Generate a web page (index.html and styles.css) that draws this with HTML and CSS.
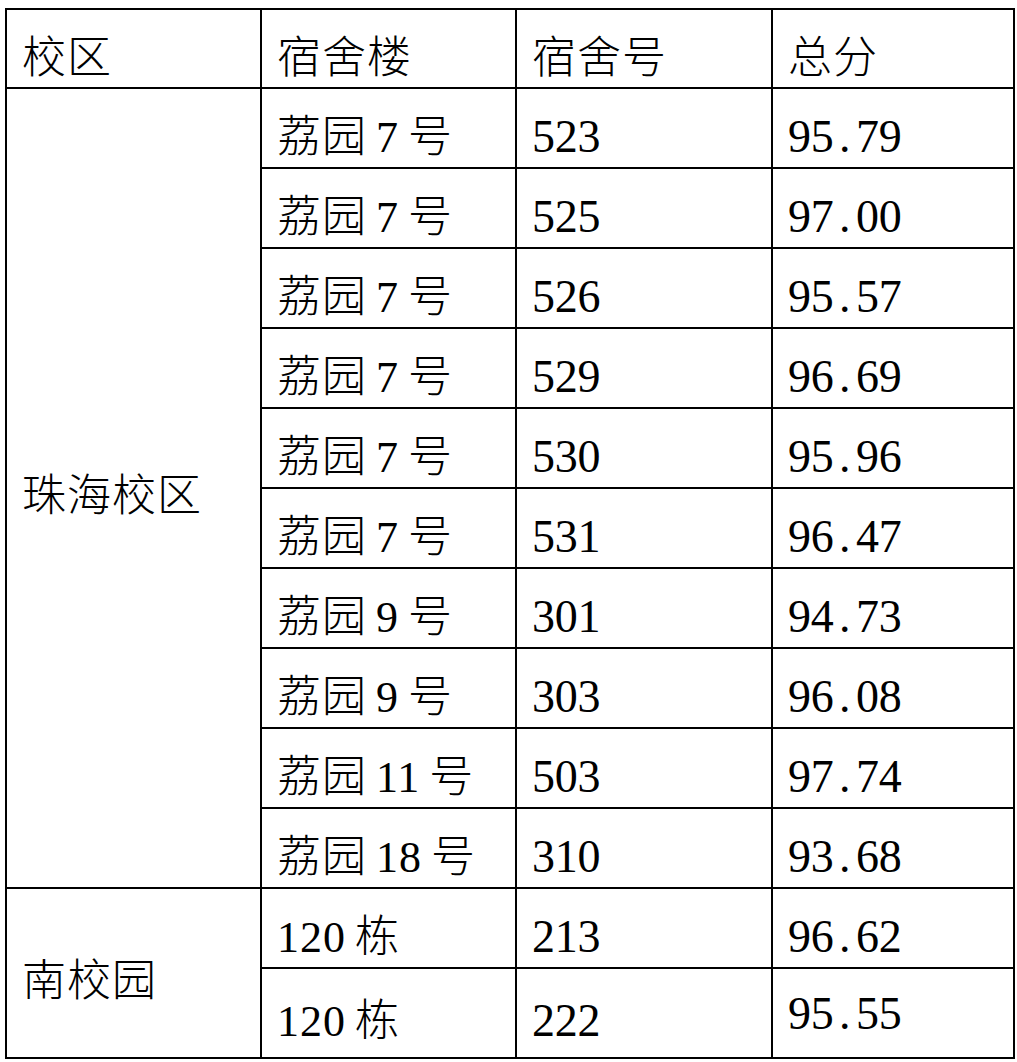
FILE: index.html
```html
<!DOCTYPE html>
<html lang="zh-CN">
<head>
<meta charset="utf-8">
<title>宿舍评分</title>
<link rel="stylesheet" href="styles.css">
</head>
<body>
<table class="grid">
  <colgroup>
    <col class="c1"><col class="c2"><col class="c3"><col class="c4">
  </colgroup>
  <tr class="head">
    <td>校区</td><td>宿舍楼</td><td>宿舍号</td><td>总分</td>
  </tr>
  <tr>
    <td class="campus" rowspan="10">珠海校区</td>
    <td>荔园 7 号</td><td class="num">523</td><td class="num">95<span class="dot">.</span>79</td>
  </tr>
  <tr><td>荔园 7 号</td><td class="num">525</td><td class="num">97<span class="dot">.</span>00</td></tr>
  <tr><td>荔园 7 号</td><td class="num">526</td><td class="num">95<span class="dot">.</span>57</td></tr>
  <tr><td>荔园 7 号</td><td class="num">529</td><td class="num">96<span class="dot">.</span>69</td></tr>
  <tr><td>荔园 7 号</td><td class="num">530</td><td class="num">95<span class="dot">.</span>96</td></tr>
  <tr><td>荔园 7 号</td><td class="num">531</td><td class="num">96<span class="dot">.</span>47</td></tr>
  <tr><td>荔园 9 号</td><td class="num">301</td><td class="num">94<span class="dot">.</span>73</td></tr>
  <tr><td>荔园 9 号</td><td class="num">303</td><td class="num">96<span class="dot">.</span>08</td></tr>
  <tr><td>荔园 11 号</td><td class="num">503</td><td class="num">97<span class="dot">.</span>74</td></tr>
  <tr><td>荔园 18 号</td><td class="num">310</td><td class="num">93<span class="dot">.</span>68</td></tr>
  <tr>
    <td class="campus" rowspan="2">南校园</td>
    <td>120 栋</td><td class="num">213</td><td class="num">96<span class="dot">.</span>62</td>
  </tr>
  <tr class="last">
    <td class="low">120 栋</td><td class="num low">222</td><td class="num high">95<span class="dot">.</span>55</td>
  </tr>
</table>
</body>
</html>
```

FILE: styles.css
```css
html, body {
  background: #ffffff;
}
body {
  margin: 8px 0 0 5px;
}
.grid {
  border-collapse: collapse;
  table-layout: fixed;
  width: 1008px;
  font-family: "Liberation Serif", "Noto Sans CJK SC", serif;
  font-weight: 300;
  font-size: 44px;
  line-height: 44px;
  letter-spacing: 1px;
  word-spacing: -3px;
  color: #000000;
}
.c1 { width: 255px; }
.c2 { width: 255px; }
.c3 { width: 256px; }
.c4 { width: 242px; }
.grid tr {
  height: 80px;
}
.grid tr.head {
  height: 79px;
}
.grid tr.last {
  height: 90px;
}
.grid td {
  border: 2px solid #000000;
  padding: 27px 0 0 15px;
  vertical-align: top;
  white-space: nowrap;
  overflow: hidden;
}
.grid td.num {
  font-size: 46px;
  letter-spacing: -0.3px;
  padding-top: 26px;
}
.grid td.campus {
  vertical-align: middle;
  padding-top: 18px;
  padding-bottom: 0;
}
.grid td.low {
  padding-top: 31px;
}
.grid td.num.low {
  padding-top: 30px;
}
.grid td.num.high {
  padding-top: 23px;
}
.dot {
  display: inline-block;
  width: 22.7px;
  text-align: center;
  letter-spacing: 0;
}
```
